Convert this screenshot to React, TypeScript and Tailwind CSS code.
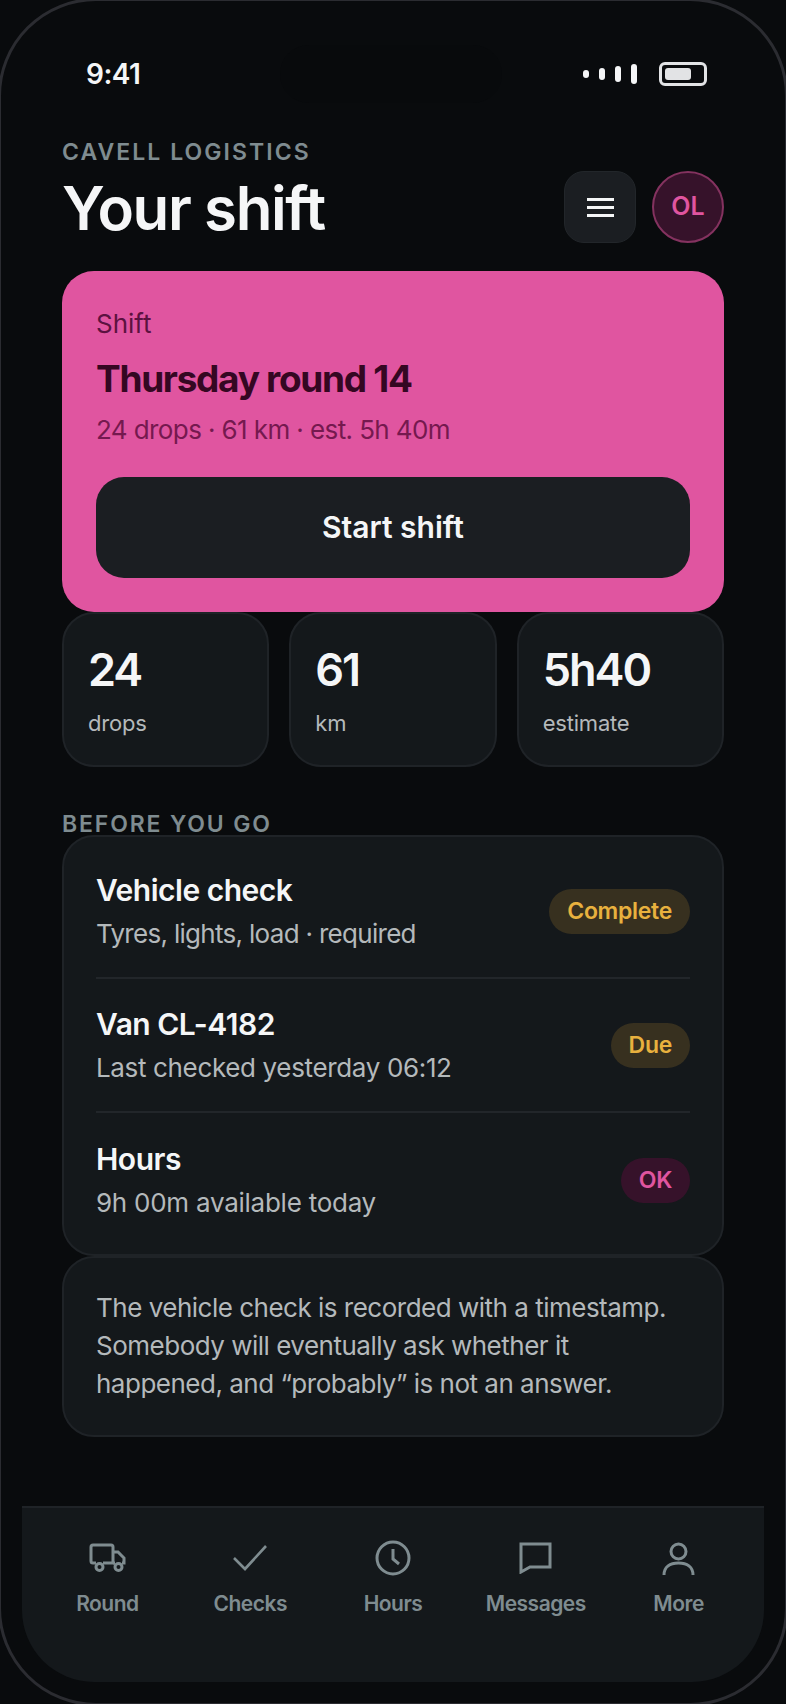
import React from 'react';

const font = { fontFamily: 'Inter, "Liberation Sans", sans-serif' };

const stats = [
  { value: '24', label: 'drops' },
  { value: '61', label: 'km' },
  { value: '5h40', label: 'estimate' },
];

const rows = [
  { title: 'Vehicle check', sub: 'Tyres, lights, load · required', subClass: 'tracking-[-0.700px]', badge: 'Complete', tone: 'amber' },
  { title: 'Van CL-4182', sub: 'Last checked yesterday 06:12', subClass: 'tracking-[-0.350px]', badge: 'Due', tone: 'amber' },
  { title: 'Hours', sub: '9h 00m available today', subClass: 'tracking-[-0.250px]', badge: 'OK', tone: 'pink' },
];

const TruckIcon = () => (
  <svg width="37" height="30" viewBox="0 0 37 30" fill="none" stroke="#7f8c90" strokeWidth="3">
    <path d="M7 20H4a2 2 0 0 1-2-2V4a2 2 0 0 1 2-2h18a2 2 0 0 1 2 2v16H14" />
    <path d="M24 9h5l6 6v5h-2M26 20h-2" />
    <circle cx="10.500" cy="24" r="3.500" />
    <circle cx="29.500" cy="24" r="3.500" />
  </svg>
);

const CheckIcon = () => (
  <svg width="34" height="27" viewBox="0 0 34 27" fill="none" stroke="#7f8c90" strokeWidth="2.600">
    <path d="M1 13l11 11L33 1" />
  </svg>
);

const ClockIcon = () => (
  <svg width="36" height="36" viewBox="0 0 36 36" fill="none" stroke="#7f8c90" strokeWidth="3">
    <circle cx="18" cy="18" r="16" />
    <path d="M18 9v10l6 5" />
  </svg>
);

const ChatIcon = () => (
  <svg width="33" height="32" viewBox="0 0 33 32" fill="none" stroke="#7f8c90" strokeWidth="3">
    <path d="M2 2h29v23H11l-9 5z" />
  </svg>
);

const UserIcon = () => (
  <svg width="33" height="33" viewBox="0 0 33 33" fill="none" stroke="#7f8c90" strokeWidth="3">
    <circle cx="16.500" cy="9.500" r="7.500" />
    <path d="M2 33c0-8 6-12 14.500-12S31 25 31 33" />
  </svg>
);

const tabs = [
  { label: 'Round', icon: <TruckIcon /> },
  { label: 'Checks', icon: <CheckIcon /> },
  { label: 'Hours', icon: <ClockIcon /> },
  { label: 'Messages', icon: <ChatIcon /> },
  { label: 'More', icon: <UserIcon /> },
];

export default function App() {
  return (
    <div className="h-[1704px] w-[786px] overflow-hidden bg-[#090b0d]" style={font}>
      {/* phone frame, slightly larger than the window so its sides are cut off */}
      <div className="relative -m-[2px] flex h-[1708px] w-[790px] flex-col rounded-[98px] border-[3px] border-[#2b2c31] bg-[#090b0d] px-[21px] pb-[21px] pt-[2px]">
        {/* dynamic island */}
        <div className="absolute left-[279px] top-[44px] h-[58px] w-[222px] rounded-full bg-[#080a0c]" />

        {/* status bar */}
        <div className="relative flex h-[88px] items-center justify-between pl-[64px] pr-[57px] pt-[54px]">
          <span className="text-[28px] font-semibold leading-[34px] tracking-[-0.500px] text-[#f5f6f7]">9:41</span>
          <div className="flex items-center gap-[22px]">
            <div className="flex items-center gap-[10px]">
              <div className="h-[8px] w-[6px] rounded-full bg-[#f5f6f7]" />
              <div className="h-[12px] w-[6px] rounded-full bg-[#f5f6f7]" />
              <div className="h-[16px] w-[6px] rounded-full bg-[#f5f6f7]" />
              <div className="h-[20px] w-[6px] rounded-full bg-[#f5f6f7]" />
            </div>
            <div className="flex h-[24px] w-[48px] items-center rounded-[6px] border-[3px] border-[#e2e3e5] px-[3px]">
              <div className="h-[12px] w-[26px] rounded-[3px] bg-[#e2e3e5]" />
            </div>
          </div>
        </div>

        <div className="flex flex-1 flex-col px-[40px]">
          {/* header */}
          <div className="mt-[47px] flex items-end justify-between">
            <div>
              <div className="text-[23px] font-semibold leading-[28px] tracking-[2.050px] text-[#7f8c90]">CAVELL LOGISTICS</div>
              <div className="mt-[7px] text-[60px] font-semibold leading-[70px] tracking-[-1.400px] text-[#f5f6f7]">Your shift</div>
            </div>
            <div className="flex gap-[16px]">
              <div className="flex h-[72px] w-[72px] flex-col items-center justify-center gap-[5px] rounded-[20px] border border-[#22262a] bg-[#1b1e22]">
                <div className="h-[3px] w-[27px] bg-[#f5f6f7]" />
                <div className="h-[3px] w-[27px] bg-[#f5f6f7]" />
                <div className="h-[3px] w-[27px] bg-[#f5f6f7]" />
              </div>
              <div className="flex h-[72px] w-[72px] items-center justify-center rounded-full border-2 border-[#84325f] bg-[#36122a] text-[25px] font-semibold text-[#e055a0]">OL</div>
            </div>
          </div>

          {/* hero */}
          <div className="mt-[28px] rounded-[32px] bg-[#e055a0] px-[34px] pb-[34px] pt-[37px]">
            <div className="text-[26px] leading-[32px] text-[#5c1240]">Shift</div>
            <div className="mt-[16px] text-[37px] font-bold leading-[46px] tracking-[-1.300px] text-[#350722]">Thursday round 14</div>
            <div className="mt-[10px] text-[26px] leading-[36px] tracking-[-0.600px] text-[#75194f]">24 drops · 61 km · est. 5h 40m</div>
            <div className="mt-[29px] flex h-[101px] items-center justify-center rounded-[28px] bg-[#1b1e22] text-[30px] font-semibold text-[#f5f6f7]">Start shift</div>
          </div>

          {/* stats */}
          <div className="grid grid-cols-3 gap-[20px]">
            {stats.map((s) => (
              <div key={s.label} className="h-[155px] rounded-[32px] border-2 border-[#1f2327] bg-[#14181b] px-[24px] pt-[29px]">
                <div className="text-[45px] font-semibold leading-[54px] tracking-[-2px] text-[#f5f6f7]">{s.value}</div>
                <div className="mt-[12px] text-[22px] leading-[28px] tracking-[-0.200px] text-[#b4b9bb]">{s.label}</div>
              </div>
            ))}
          </div>

          <div className="mt-[43px] h-[25px] text-[23px] font-semibold leading-[28px] tracking-[1.850px] text-[#7f8c90]">BEFORE YOU GO</div>

          {/* checklist */}
          <div className="rounded-[32px] border-2 border-[#1f2327] bg-[#14181b] px-[32px] pb-[7px] pt-[8px]">
            {rows.map((r, i) => (
              <div key={r.title} className={`flex h-[134px] items-center justify-between ${i < 2 ? 'border-b-2 border-[#22262a]' : ''}`}>
                <div>
                  <div className="text-[30px] font-semibold leading-[38px] tracking-[-0.500px] text-[#f5f6f7]">{r.title}</div>
                  <div className={`mt-[8px] text-[26px] leading-[34px] text-[#b4b9bb] ${r.subClass}`}>{r.sub}</div>
                </div>
                <div className={`flex h-[45px] items-center rounded-full px-[18px] text-[23px] font-semibold tracking-[-0.300px] ${r.tone === 'amber' ? 'bg-[#37301f] text-[#e8b13e]' : 'bg-[#36122a] text-[#e055a0]'}`}>
                  {r.badge}
                </div>
              </div>
            ))}
          </div>

          {/* note */}
          <div className="rounded-[32px] border-2 border-[#1f2327] bg-[#14181b] px-[32px] pb-[32px] pt-[31px] text-[26px] leading-[38px] tracking-[-0.500px] text-[#b4b9bb]">
            The vehicle check is recorded with a timestamp. Somebody will eventually ask whether it happened, and “probably” is not an answer.
          </div>
        </div>

        {/* tab bar */}
        <div className="grid h-[176px] grid-cols-5 rounded-b-[72px] border-t-2 border-[#1f2327] bg-[#14181b] px-[14px] pt-[30px]">
          {tabs.map((t) => (
            <div key={t.label} className="flex flex-col items-center">
              <div className="flex h-[40px] items-center justify-center">{t.icon}</div>
              <div className="mt-[12px] text-[21px] font-semibold leading-[28px] tracking-[-0.500px] text-[#7f8c90]">{t.label}</div>
            </div>
          ))}
        </div>
      </div>
    </div>
  );
}
